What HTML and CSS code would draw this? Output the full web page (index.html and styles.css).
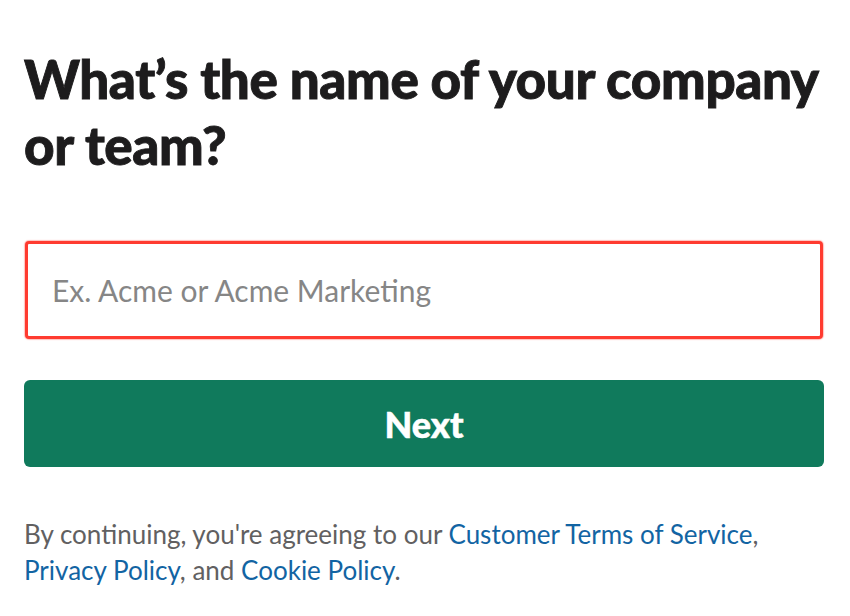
FILE: index.html
```html
<!DOCTYPE html>
<html lang="en">
<head>
<meta charset="utf-8">
<title>Name your team</title>
<link rel="stylesheet" href="styles.css">
</head>
<body>
<main class="page">
  <h1 class="title">What’s the name of your company or team?</h1>
  <form class="form">
    <input class="field" type="text" placeholder="Ex. Acme or Acme Marketing">
    <button class="next" type="button">Next</button>
  </form>
  <p class="legal">By continuing, you're agreeing to our <a href="#">Customer Terms of Service</a>, <a href="#">Privacy Policy</a>, and <a href="#">Cookie Policy</a>.</p>
</main>
</body>
</html>
```
FILE: styles.css
```css
html, body {
  margin: 0;
  padding: 0;
  background: #ffffff;
}
body {
  font-family: Lato, "Noto Sans", sans-serif;
  color: #1d1c1d;
}
.page {
  width: 800px;
  padding: 0 24px;
  display: flex;
  flex-direction: column;
}
.title {
  margin: 46px 0 0;
  font-size: 53px;
  font-weight: 900;
  line-height: 66px;
  letter-spacing: -0.4px;
  color: #1d1c1d;
  -webkit-text-stroke: 0.9px #1d1c1d;
}
.form {
  display: flex;
  flex-direction: column;
  margin-top: 63px;
}
.field {
  box-sizing: border-box;
  height: 98px;
  margin: 0 1px;
  padding: 0 24px;
  border: 3px solid #ff3b30;
  border-radius: 4px;
  font-family: Lato, sans-serif;
  font-size: 30px;
  color: #1d1c1d;
  outline: none;
  box-shadow: 0 0 1px 1px rgba(255, 80, 70, 0.35);
}
.field::placeholder {
  color: #868686;
}
.next {
  margin-top: 41px;
  height: 87px;
  border: none;
  border-radius: 6px;
  background: #107a5c;
  color: #ffffff;
  font-family: Lato, sans-serif;
  font-size: 36px;
  font-weight: 900;
  -webkit-text-stroke: 0.5px #ffffff;
}
.legal {
  margin: 49px 0 0;
  font-size: 26px;
  line-height: 36px;
  color: #616061;
}
.legal a {
  color: #1264a3;
  text-decoration: none;
}
```
